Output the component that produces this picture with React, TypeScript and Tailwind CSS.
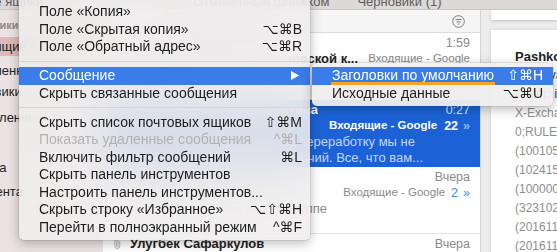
import { Paperclip } from "lucide-react"

type MenuItem =
  | { label: string; keys?: string; disabled?: boolean; active?: boolean; sub?: boolean }
  | "sep"

const mainMenu: MenuItem[] = [
  { label: "Поле «Копия»" },
  { label: "Поле «Скрытая копия»", keys: "⌥⌘B" },
  { label: "Поле «Обратный адрес»", keys: "⌥⌘R" },
  "sep",
  { label: "Сообщение", active: true, sub: true },
  { label: "Скрыть связанные сообщения" },
  "sep",
  { label: "Скрыть список почтовых ящиков", keys: "⇧⌘M" },
  { label: "Показать удаленные сообщения", keys: "^⌘L", disabled: true },
  { label: "Включить фильтр сообщений", keys: "⌘L" },
  { label: "Скрыть панель инструментов" },
  { label: "Настроить панель инструментов..." },
  { label: "Скрыть строку «Избранное»", keys: "⌥⇧⌘H" },
  { label: "Перейти в полноэкранный режим", keys: "^⌘F" },
]

const detailLines = [
  "Кому: vadim.pashkov@gmail.com",
  "Ответ: info@company.ru",
  "X-Exchange-Antispam-Report",
  "0;RULEID:(22001)",
  "(100105000095)",
  "(102415395)",
  "(100000700101)",
  "(3231022)",
  "(20161123555025)",
  "(20161123564025)",
]

function MenuRow({ item }: { item: Exclude<MenuItem, "sep"> }) {
  return (
    <div
      className={`flex h-[17.5px] items-center pl-[20px] pr-[8px] ${
        item.active ? "bg-[#3a7de9] text-white" : item.disabled ? "text-[#b4b1b2]" : "text-[#1d1d1d]"
      }`}
    >
      <span className="flex-1 whitespace-nowrap">{item.label}</span>
      {item.keys && <span className="whitespace-nowrap">{item.keys}</span>}
      {item.sub && (
        <svg width="8" height="9" viewBox="0 0 8 9" className="mr-[3px]">
          <polygon points="0,0 8,4.5 0,9" fill="white" />
        </svg>
      )}
    </div>
  )
}

function Sidebar() {
  return (
    <div className="flex w-[103px] shrink-0 flex-col overflow-hidden bg-[#ebe3e3] text-[13px] text-[#222]">
      <div className="mt-[8px] -ml-[54px] flex h-[14px] shrink-0 items-center whitespace-nowrap text-[11px] font-bold text-[#8d8788]">
        Смарт-ящики
      </div>
      <div className="mt-[5px] flex h-[19px] shrink-0 items-center bg-[#dfb9b9]">
        <span className="-ml-[35px] whitespace-nowrap">Входящие</span>
      </div>
      <div className="mt-[5px] -ml-[50px] flex h-[20px] shrink-0 items-center whitespace-nowrap">Отправленные</div>
      <div className="mt-[1px] -ml-[43px] flex h-[20px] shrink-0 items-center whitespace-nowrap">Черновики</div>
      <div className="mt-[6px] -ml-[23px] flex h-[20px] shrink-0 items-center whitespace-nowrap">Удаленные</div>
      <div className="mt-[30px] -ml-[43px] flex h-[20px] shrink-0 items-center whitespace-nowrap">Корзина</div>
      <div className="mt-[4px] -ml-[27px] flex h-[20px] shrink-0 items-center whitespace-nowrap">Клиента</div>
    </div>
  )
}

function EndClip({ width, className, children }: { width: number; className?: string; children: string }) {
  return (
    <div className={`flex shrink-0 justify-end overflow-hidden whitespace-nowrap ${className ?? ""}`} style={{ width }}>
      <span className="shrink-0">{children}</span>
    </div>
  )
}

function MessageList() {
  return (
    <div className="flex w-[377px] shrink-0 flex-col overflow-hidden bg-white text-[13px]">
      <div className="flex h-[23px] shrink-0 items-center justify-end border-b border-[#dedcdc] bg-[#f6f5f5] pr-[15px]">
        <svg width="13" height="13" viewBox="0 0 13 13" fill="none" stroke="#7d7b7c" strokeWidth="1">
          <circle cx="6.5" cy="6.5" r="5.8" />
          <line x1="3.5" y1="4.5" x2="9.5" y2="4.5" />
          <line x1="4.5" y1="6.8" x2="8.5" y2="6.8" />
          <line x1="5.5" y1="9" x2="7.5" y2="9" />
        </svg>
      </div>

      {/* row 1 */}
      <div className="flex h-[67px] shrink-0 flex-col border-b border-[#e3e3e3] pt-[2px] pl-[27px] pr-[10px]">
        <div className="flex h-[16px] items-center">
          <span className="flex-1 font-bold text-[#222]">Наталья Фатьянова</span>
          <span className="text-[12.5px] text-[#8a8a8a]">1:59</span>
        </div>
        <div className="flex h-[16px] items-center">
          <EndClip width={228} className="font-bold text-[#222]">
            Приглашение от Фатьяновской к...
          </EndClip>
          <span className="ml-auto text-[11.5px] text-[#8a8a8a]">Входящие - Google</span>
        </div>
      </div>

      {/* row 2 selected */}
      <div className="flex h-[67px] shrink-0 flex-col bg-[#1c62d6] pt-[2px] pl-[27px] pr-[10px]">
        <div className="flex h-[16px] items-center">
          <EndClip width={188} className="font-bold text-white">
            Екатерина Никитина
          </EndClip>
          <span className="ml-auto text-[12.5px] text-[#dbe6fb]">0:27</span>
        </div>
        <div className="flex h-[16px] items-center justify-end text-[11.5px] font-semibold text-white">
          <span>Входящие - Google</span>
          <span className="ml-[7px] text-[12.5px]">22</span>
          <span className="ml-[5px] text-[12.5px] text-[#8db3f4]">»</span>
        </div>
        <div className="flex h-[16px] items-center">
          <EndClip width={285} className="text-[#c2d6fa]">
            Ваша заявка отправлена на переработку мы не
          </EndClip>
        </div>
        <div className="flex h-[16px] items-center">
          <EndClip width={293} className="text-[#c2d6fa]">
            превышение полномочий. Все, что вам...
          </EndClip>
        </div>
      </div>

      {/* row 3 */}
      <div className="flex h-[67px] shrink-0 flex-col border-b border-[#e3e3e3] pt-[2px] pl-[27px] pr-[10px]">
        <div className="flex h-[16px] items-center">
          <span className="flex-1 font-bold text-[#222]">Google Календарь</span>
          <span className="text-[12.5px] text-[#8a8a8a]">Вчера</span>
        </div>
        <div className="flex h-[16px] items-center justify-end text-[11.5px] text-[#8a8a8a]">
          <span>Входящие - Google</span>
          <span className="ml-[6px] text-[12.5px] text-[#3d86f0]">2</span>
          <span className="ml-[5px] text-[12.5px] text-[#3d86f0]">»</span>
        </div>
        <div className="flex h-[16px] items-center">
          <EndClip width={197} className="text-[#8a8a8a]">
            Уведомление о встрече в группе
          </EndClip>
        </div>
      </div>

      {/* row 4 */}
      <div className="flex h-[67px] shrink-0 flex-col pt-[2px] pr-[10px]">
        <div className="flex h-[16px] items-center">
          <span className="flex w-[27px] justify-end pr-[8px]">
            <Paperclip size={10} strokeWidth={1.6} className="-rotate-45 text-[#9a9a9a]" />
          </span>
          <span className="flex-1 font-bold text-[#222]">Улугбек Сафаркулов</span>
          <span className="text-[12.5px] text-[#8a8a8a]">Вчера</span>
        </div>
      </div>
    </div>
  )
}

function Detail() {
  return (
    <div className="flex min-w-0 flex-1 flex-col overflow-hidden border-l border-[#d3d3d3] bg-[#ececec]">
      <div className="ml-[10px] h-[10px] shrink-0 bg-white shadow-[0_1px_3px_rgba(0,0,0,0.18)]" />
      <div className="ml-[10px] mt-[10px] shrink-0 bg-white pl-[24px] pt-[17px] pb-[10px] shadow-[0_0_3px_rgba(0,0,0,0.15)]">
        <div className="h-[19px] whitespace-nowrap text-[13px] font-bold leading-[19px] text-[#222]">
          Pashkov Vadim
        </div>
        {detailLines.map((l, i) => (
          <div
            key={i}
            className={`h-[19px] whitespace-nowrap text-[12px] leading-[19px] ${i < 2 ? "text-[#333]" : "text-[#8e8e8e]"}`}
          >
            {l}
          </div>
        ))}
      </div>
    </div>
  )
}

export default function App() {
  return (
    <div className="relative h-[252px] w-[557px] overflow-hidden bg-white font-['Liberation_Sans','DejaVu_Sans',sans-serif]">
      <div className="flex h-full flex-col">
        <div className="flex h-[10px] shrink-0 overflow-hidden border-b border-[#c9c6c6] bg-[#dcd9d9] text-[13px] leading-[14px] text-[#5f5d5d]">
          <span className="-mt-[5px] -ml-[58px] whitespace-nowrap">Почтовые ящики</span>
          <span className="-mt-[5px] ml-[150px] whitespace-nowrap">Отмеченные флажком</span>
          <span className="-mt-[5px] ml-[28px] whitespace-nowrap">Черновики (1)</span>
        </div>
        <div className="flex min-h-0 flex-1">
          <Sidebar />
          <MessageList />
          <Detail />
        </div>
      </div>

      {/* main menu */}
      <div className="absolute top-[-2px] left-[19px] w-[291px] rounded-b-[5px] bg-[#efeded]/[0.87] pt-[5px] pb-[4px] text-[14px] shadow-[0_3px_12px_rgba(0,0,0,0.28),0_0_0_0.5px_rgba(0,0,0,0.15)] backdrop-blur-xl">
        {mainMenu.map((item, i) =>
          item === "sep" ? (
            <div key={i} className="flex h-[11.5px] items-center">
              <div className="h-px w-full bg-[#d7d4d5]" />
            </div>
          ) : (
            <MenuRow key={i} item={item} />
          ),
        )}
      </div>

      {/* submenu */}
      <div className="absolute top-[63px] left-[312px] w-[241px] rounded-[5px] bg-[#efeded]/90 py-[4px] text-[14px] shadow-[0_3px_12px_rgba(0,0,0,0.28),0_0_0_0.5px_rgba(0,0,0,0.15)] backdrop-blur-xl">
        <div className="flex h-[17.5px] items-center bg-[#3a7de9] pl-[20px] pr-[10px] text-white">
          <span className="relative flex-1 whitespace-nowrap">
            <span className="relative">
              Заголовки по умолчанию
              <span className="absolute top-[15px] -left-[1px] -right-[1px] h-[2.5px] bg-[#f4a423]" />
            </span>
          </span>
          <span className="whitespace-nowrap">⇧⌘H</span>
        </div>
        <div className="flex h-[17.5px] items-center pl-[20px] pr-[10px] text-[#1d1d1d]">
          <span className="flex-1 whitespace-nowrap">Исходные данные</span>
          <span className="whitespace-nowrap">⌥⌘U</span>
        </div>
      </div>
    </div>
  )
}
